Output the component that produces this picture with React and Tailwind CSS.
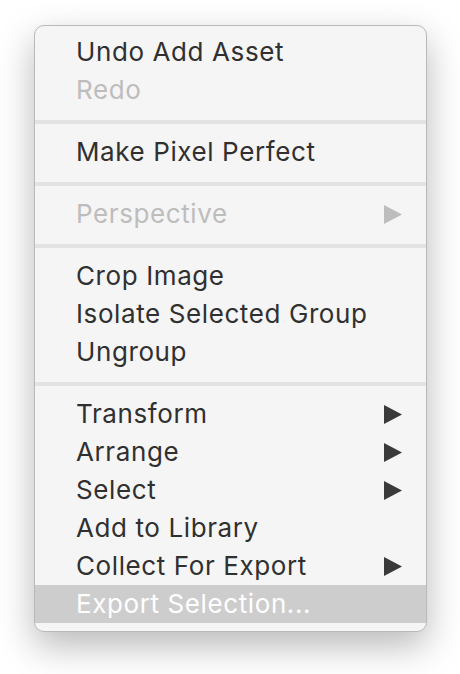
const Arrow = ({ disabled }) => (
  <svg
    width="18"
    height="19"
    viewBox="0 0 18 19"
    className={disabled ? "fill-[#bdbdbd]" : "fill-[#3a3a3a]"}
  >
    <polygon points="0,0 18,9.5 0,19" />
  </svg>
);

const Item = ({ label, disabled, submenu, active }) => (
  <div
    className={`flex h-[38px] items-center justify-between pl-[41px] pr-[24px] ${
      active ? "bg-[#cdcdcd] text-white" : disabled ? "text-[#bdbdbd]" : "text-[#303030]"
    }`}
  >
    <span>{label}</span>
    {submenu && <Arrow disabled={disabled} />}
  </div>
);

const Separator = () => (
  <div className="pt-[11px] pb-[9px]">
    <div className="h-[4px] bg-[#e3e3e3]" />
  </div>
);

const groups = [
  [{ label: "Undo Add Asset" }, { label: "Redo", disabled: true }],
  [{ label: "Make Pixel Perfect" }],
  [{ label: "Perspective", disabled: true, submenu: true }],
  [{ label: "Crop Image" }, { label: "Isolate Selected Group" }, { label: "Ungroup" }],
  [
    { label: "Transform", submenu: true },
    { label: "Arrange", submenu: true },
    { label: "Select", submenu: true },
    { label: "Add to Library" },
    { label: "Collect For Export", submenu: true },
    { label: "Export Selection...", active: true },
  ],
];

export default function App() {
  return (
    <div className="h-[674px] w-[460px] bg-white pt-[25px] pl-[34px]">
      <div
        className="w-[393px] overflow-hidden rounded-[10px] border border-[#b9b9b9] bg-[#f5f5f5] pt-[7px] pb-[8px] text-[26px] leading-none tracking-[0.6px] shadow-[0_14px_36px_rgba(0,0,0,0.28)]"
        style={{ fontFamily: "Inter, 'Noto Sans', sans-serif" }}
      >
        {groups.map((group, i) => (
          <div key={i}>
            {i > 0 && <Separator />}
            {group.map((item) => (
              <Item key={item.label} {...item} />
            ))}
          </div>
        ))}
      </div>
    </div>
  );
}
